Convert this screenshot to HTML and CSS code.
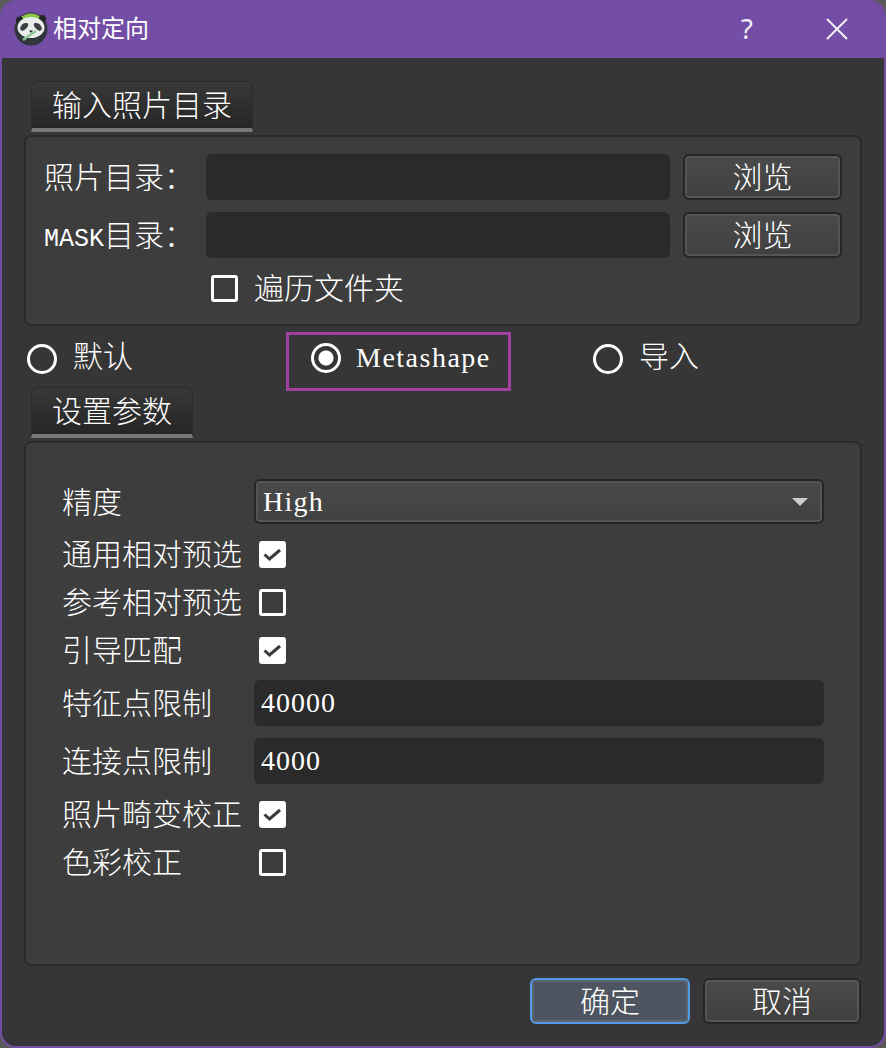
FILE: index.html
```html
<!DOCTYPE html>
<html lang="zh-CN">
<head>
  <meta charset="UTF-8" />
  <title>相对定向</title>
  <link rel="stylesheet" href="styles.css">
</head>
<body>
  <div class="dialog">
    <div class="titlebar">
      <svg class="logo" width="34" height="34" viewBox="0 0 34 34">
        <circle cx="17" cy="17" r="16.500" fill="#30363a"/>
        <path d="M5 7A16 16 0 0 1 29 7L26 9A13 13 0 0 0 8 9Z" fill="#8cc84b"/>
        <circle cx="5.500" cy="8" r="3.500" fill="#22262a"/>
        <circle cx="28.500" cy="6.500" r="3.500" fill="#22262a"/>
        <ellipse cx="17" cy="15.500" rx="13.500" ry="10.500" fill="#e9ecea"/>
        <path d="M6 17C7 12 10 10 14 11.500C15 14 12 18 8 19Z" fill="#3a4044"/>
        <path d="M28 17C27 12 24 10 20 11.500C19 14 22 18 26 19Z" fill="#3a4044"/>
        <path d="M15 18.500H19L17 21Z" fill="#22262a"/>
        <path d="M9 28C13 25 17 22 22 19" stroke="#8fc79a" stroke-width="2.500" fill="none"/>
      </svg>
      <span class="title-text">相对定向</span>
      <span class="help">?</span>
      <svg class="close" width="22" height="22" viewBox="0 0 22 22">
        <path d="M1 1L21 21M21 1L1 21" stroke="#f4f0f8" stroke-width="2" fill="none"/>
      </svg>
    </div>

    <div class="content">
      <div class="tab">输入照片目录</div>
      <div class="panel panel-dirs">
        <label class="text">照片目录：</label>
        <input class="field" type="text" />
        <button class="btn">浏览</button>
        <label class="text"><span class="latin-mask">MASK</span>目录：</label>
        <input class="field" type="text" />
        <button class="btn">浏览</button>
        <div class="check-row">
          <span class="check"></span>
          <span class="text">遍历文件夹</span>
        </div>
      </div>

      <div class="radio-row">
        <div class="radio-item">
          <span class="radio"></span>
          <span class="radio-text">默认</span>
        </div>
        <div class="radio-item radio-selected">
          <span class="radio radio-on"></span>
          <span class="latin latin-meta">Metashape</span>
        </div>
        <div class="radio-item">
          <span class="radio"></span>
          <span class="radio-text">导入</span>
        </div>
      </div>

      <div class="tab">设置参数</div>
      <div class="panel panel-params">
        <label class="text">精度</label>
        <div class="select">
          <span class="latin latin-high">High</span>
          <span class="arrow"></span>
        </div>

        <label class="text">通用相对预选</label>
        <span class="check check-on"><svg width="21" height="21" viewBox="0 0 21 21"><path d="M2.500 10.500L7.500 15L18 6" stroke="#3a3a3a" stroke-width="3" fill="none"/></svg></span>

        <label class="text">参考相对预选</label>
        <span class="check"></span>

        <label class="text">引导匹配</label>
        <span class="check check-on"><svg width="21" height="21" viewBox="0 0 21 21"><path d="M2.500 10.500L7.500 15L18 6" stroke="#3a3a3a" stroke-width="3" fill="none"/></svg></span>

        <label class="text">特征点限制</label>
        <input class="field latin" type="text" value="40000" />

        <label class="text">连接点限制</label>
        <input class="field latin" type="text" value="4000" />

        <label class="text">照片畸变校正</label>
        <span class="check check-on"><svg width="21" height="21" viewBox="0 0 21 21"><path d="M2.500 10.500L7.500 15L18 6" stroke="#3a3a3a" stroke-width="3" fill="none"/></svg></span>

        <label class="text">色彩校正</label>
        <span class="check"></span>
      </div>

      <div class="footer">
        <button class="btn btn-primary">确定</button>
        <button class="btn btn-cancel">取消</button>
      </div>
    </div>
  </div>
</body>
</html>
```

FILE: styles.css
```css
* {
  box-sizing: border-box;
  margin: 0;
  padding: 0;
}

body {
  width: 886px;
  height: 1048px;
  background: #5a5a5a;
  font-family: "Noto Sans CJK SC", sans-serif;
  font-size: 30px;
  font-weight: 300;
  color: #fff;
  overflow: hidden;
}

.text {
  white-space: nowrap;
  margin-left: -1px;
  padding-bottom: 4px;
}

.latin {
  font-family: "Liberation Serif", "Noto Sans CJK SC", serif;
  font-size: 28px;
  font-weight: 400;
  letter-spacing: 1px;
}

.latin-meta {
  letter-spacing: 1.500px;
}

.latin-high {
  letter-spacing: 1.250px;
}

.latin-mask {
  font-family: "Liberation Mono", monospace;
  font-size: 25px;
  font-weight: 400;
}

.dialog {
  width: 886px;
  height: 1048px;
  border: 2px solid #744ea6;
  border-radius: 16px;
  background: #363636;
  overflow: hidden;
  display: flex;
  flex-direction: column;
}

.titlebar {
  height: 56px;
  flex: none;
  background: #744ea6;
  display: flex;
  align-items: center;
  padding: 0 36px 2px 12px;
}

.logo {
  margin-right: 5px;
}

.title-text {
  font-size: 24px;
  font-weight: 400;
  flex: 1;
  padding-bottom: 5px;
}

.help {
  font-family: "Noto Sans", sans-serif;
  font-size: 28px;
  font-weight: 400;
  color: #f4f0f8;
  margin-right: 73px;
  padding-bottom: 2px;
}

.content {
  flex: 1;
  padding: 23px 22px 0;
  display: flex;
  flex-direction: column;
}

.tab {
  align-self: flex-start;
  height: 51px;
  margin: 0 0 3px 7px;
  padding: 0 20px;
  line-height: 43px;
  background: linear-gradient(to bottom, #383838, #262626);
  border: 1px solid #2b2b2b;
  border-bottom: 4px solid #777;
  border-radius: 7px 7px 0 0;
}

.panel {
  background: #3d3d3d;
  border: 2px solid #2a2a2a;
  border-radius: 7px;
}

.panel-dirs {
  height: 191px;
  padding: 17px 18px 0 19px;
  display: grid;
  grid-template-columns: 148px 1fr 159px;
  grid-template-rows: 46px 46px 36px;
  column-gap: 13px;
  row-gap: 12px;
  align-items: center;
}

.field {
  display: block;
  width: 100%;
  height: 46px;
  background: #2a2a2a;
  border: none;
  border-radius: 6px;
  padding: 0 7px;
  color: #fff;
  outline: none;
}

.btn {
  height: 46px;
  font-family: inherit;
  font-size: 30px;
  font-weight: 300;
  line-height: 1;
  color: #fff;
  padding-bottom: 4px;
  background: linear-gradient(to bottom, #4a4a4a, #404040);
  border: 2px solid #262626;
  border-radius: 6px;
  box-shadow: inset 0 0 0 2px #555;
}

.check-row {
  grid-column: 2 / -1;
  display: flex;
  align-items: center;
  gap: 17px;
  margin-left: 5px;
}

.check {
  width: 27px;
  height: 27px;
  flex: none;
  border: 3px solid #fff;
  border-radius: 3px;
  display: flex;
  align-items: center;
  justify-content: center;
}

.check-on {
  background: #fff;
}

.radio-row {
  height: 61px;
  padding: 6px 0 0 3px;
  display: grid;
  grid-template-columns: 259px 307px auto;
  align-items: start;
}

.radio-item {
  display: flex;
  align-items: center;
  height: 44px;
  gap: 16px;
  padding-top: 9px;
}

.radio-text {
  padding-bottom: 9px;
}

.radio-selected {
  width: 225px;
  height: 59px;
  border: 3px solid #a040a0;
  padding: 8px 0 0 22px;
  align-items: flex-start;
  gap: 15px;
  line-height: 30px;
}

.radio {
  width: 30px;
  height: 30px;
  flex: none;
  border: 3px solid #fff;
  border-radius: 50%;
}

.radio-on {
  background: radial-gradient(circle, #fff 0 7px, transparent 8px);
}

.panel-params {
  height: 525px;
  padding: 36px 36px 0 37px;
  display: grid;
  grid-template-columns: 191px 1fr;
  grid-template-rows: 45px 36px 36px 36px 46px 46px 36px 36px;
  row-gap: 12px;
  align-items: center;
  justify-items: start;
}

.panel-params .check {
  margin-left: 5px;
}

.select {
  width: 100%;
  height: 45px;
  padding: 0 14px 0 7px;
  display: flex;
  align-items: center;
  justify-content: space-between;
  background: linear-gradient(to bottom, #4a4a4a, #404040);
  border: 2px solid #262626;
  border-radius: 6px;
  box-shadow: inset 0 0 0 2px #555;
}

.arrow {
  width: 0;
  height: 0;
  border-left: 8px solid transparent;
  border-right: 8px solid transparent;
  border-top: 8px solid #ccc;
}

.footer {
  margin-top: 12px;
  padding-right: 1px;
  display: flex;
  justify-content: flex-end;
  gap: 13px;
}

.btn-primary {
  width: 160px;
  background: #4e5560;
  border-color: #4f9ae0;
  box-shadow: inset 0 0 0 2px #5c6570;
}

.btn-cancel {
  width: 158px;
}
```
